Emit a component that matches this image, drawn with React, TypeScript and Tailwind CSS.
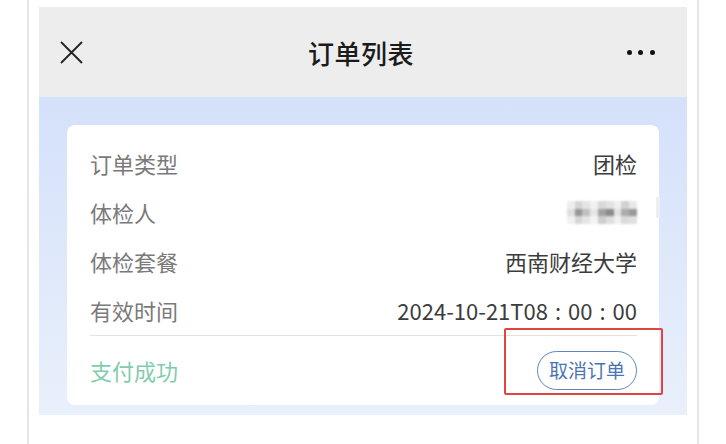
const rows = [
  { label: "订单类型", value: "团检" },
  { label: "体检人", value: null },
  { label: "体检套餐", value: "西南财经大学" },
  { label: "有效时间", value: "2024-10-21T08:00:00" },
];

// pixelated stand-in for the redacted name
const mosaic = [
  ["#eeeeee", "#d4d4d4", "#e4e4e4", "#f0f0f0", "#d8d8d8", "#e2e2e2", "#efefef", "#d2d2d2", "#e8e8e8"],
  ["#dedede", "#969696", "#c0c0c0", "#e6e6e6", "#a2a2a2", "#8a8a8a", "#e2e2e2", "#acacac", "#989898"],
  ["#f1f1f1", "#d6d6d6", "#e6e6e6", "#f3f3f3", "#cecece", "#dedede", "#f0f0f0", "#dadada", "#e0e0e0"],
];

const BlurredName = () => (
  <div className="flex flex-col blur-[1px]">
    {mosaic.map((line, r) => (
      <div key={r} className="flex">
        {line.map((c, i) => (
          <span key={i} className="block w-[7.8px] h-[7.7px]" style={{ backgroundColor: c }} />
        ))}
      </div>
    ))}
  </div>
);

const Value = ({ text }: { text: string }) => {
  const parts = text.split(":");
  return (
    <span className="text-[#3c3c3c]">
      {parts.map((p, i) => (
        <span key={i}>
          {i > 0 && <span className="px-[7px]">:</span>}
          {p}
        </span>
      ))}
    </span>
  );
};

/**
 * Order list screen.
 */
export default function App() {
  const font = { fontFamily: '"Noto Sans CJK SC", "Noto Sans", sans-serif' };

  return (
    <div className="w-[726px] h-[444px] bg-white overflow-hidden" style={font}>
      <div className="ml-[27px] w-[672px] h-[444px] border-x-2 border-[#e4e5e8] pl-[10px] pt-[7px]">
        <div className="w-[648px]">
          {/* header */}
          <div className="h-[90px] bg-[#ededed] flex items-center justify-between pl-[21px] pr-[32px]">
            <svg width="23" height="23" viewBox="0 0 23 23" className="text-[#222]">
              <path d="M1 1 L22 22 M22 1 L1 22" stroke="currentColor" strokeWidth="1.8" fill="none" />
            </svg>
            <h1 className="text-[26px] font-medium text-[#1b1b1b] tracking-[0.5px] ml-[12px]">订单列表</h1>
            <div className="flex items-center gap-[6.5px]">
              <span className="w-[5px] h-[5px] rounded-full bg-[#111]" />
              <span className="w-[5px] h-[5px] rounded-full bg-[#111]" />
              <span className="w-[5px] h-[5px] rounded-full bg-[#111]" />
            </div>
          </div>

          {/* content */}
          <div className="relative h-[318px] bg-linear-to-b from-[#d4e1fa] to-[#e9f0fb] px-[28px] pt-[28px]">
            <div className="h-[280px] bg-white rounded-[8px] pr-[22px] pl-[23px] pt-[14px]">
              {rows.map((row) => (
                <div key={row.label} className="h-[49px] flex items-center justify-between text-[22px]">
                  <span className="text-[#7a7a7a]">{row.label}</span>
                  {row.value ? <Value text={row.value} /> : <BlurredName />}
                </div>
              ))}
              <div className="border-t border-[#e2e2e2]" />
              <div className="h-[68px] flex items-center justify-between">
                <span className="text-[22px] text-[#7fcdab]">支付成功</span>
                <button className="w-[100px] h-[39px] rounded-full border-[1.5px] border-[#5c87c4] text-[19px] text-[#4a75b3] flex items-center justify-center">
                  取消订单
                </button>
              </div>
            </div>
            <div className="absolute left-[617px] top-[100px] w-[4px] h-[21px] bg-[#eceef3] blur-[0.5px]" />
            <div className="absolute left-[465px] top-[231px] w-[159px] h-[67px] border-2 border-[#e0463f] rounded-[2px]" />
          </div>
        </div>
      </div>
    </div>
  );
}
